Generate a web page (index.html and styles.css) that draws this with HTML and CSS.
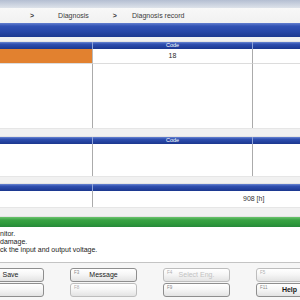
FILE: index.html
```html
<!DOCTYPE html>
<html>
<head>
<meta charset="utf-8">
<link rel="stylesheet" href="styles.css">
</head>
<body>
<div class="app">
  <div class="topband"></div>
  <div class="crumbs">
    <span class="sep sep-a">&gt;</span>
    <span class="crumb crumb-a">Diagnosis</span>
    <span class="sep sep-b">&gt;</span>
    <span class="crumb crumb-b">Diagnosis record</span>
  </div>
  <div class="titlebar"></div>
  <div class="band band-a"></div>

  <section class="grid3">
    <div class="th th-1"></div><div class="th th-2">Code</div><div class="th th-3"></div>
    <div class="td c1 first sel"></div><div class="td c2 first">18</div><div class="td c3 first"></div>
    <div class="td c1 fill-a"></div><div class="td c2 fill-a"></div><div class="td c3 fill-a"></div>
  </section>
  <div class="band band-b"></div>

  <section class="grid3">
    <div class="th th-1"></div><div class="th th-2">Code</div><div class="th th-3"></div>
    <div class="td c1 fill-b"></div><div class="td c2 fill-b"></div><div class="td c3 fill-b"></div>
  </section>
  <div class="band band-c"></div>

  <section class="grid2">
    <div class="th th-1"></div><div class="th th-2w"></div>
    <div class="td c1 row3"></div><div class="td c2w row3"><span class="hours">908 [h]</span></div>
  </section>
  <div class="band band-d"></div>
  <div class="greenbar"></div>

  <div class="message">
    <p class="msg-line">nitor.</p>
    <p class="msg-line">damage.</p>
    <p class="msg-line">ck the input and output voltage.</p>
  </div>

  <div class="footer">
    <div class="keys">
      <div class="key"><span class="fk"></span><span class="kl">Save</span></div>
      <div class="key"><span class="fk">F3</span><span class="kl">Message</span></div>
      <div class="key off"><span class="fk">F4</span><span class="kl">Select Eng.</span></div>
      <div class="key off"><span class="fk">F5</span><span class="kl"></span></div>
      <div class="key"><span class="fk"></span><span class="kl"></span></div>
      <div class="key off"><span class="fk">F8</span><span class="kl"></span></div>
      <div class="key"><span class="fk">F9</span><span class="kl"></span></div>
      <div class="key"><span class="fk">F11</span><span class="kl help">Help</span></div>
    </div>
  </div>
</div>
</body>
</html>
```

FILE: styles.css
```css
html, body {
  margin: 0;
  padding: 0;
  width: 300px;
  height: 300px;
  overflow: hidden;
  background: #f3f3f3;
}

.app {
  width: 300px;
  height: 300px;
  overflow: hidden;
  font-family: "Liberation Sans", Arial, sans-serif;
  color: #2a2a2a;
  display: flex;
  flex-direction: column;
}

.topband {
  height: 8px;
  background: linear-gradient(#b4bed2, #dde2ea);
  flex: none;
}

.crumbs {
  height: 15px;
  flex: none;
  background: linear-gradient(#f8f8f8, #f1f1f1);
  display: flex;
  align-items: center;
  font-size: 7px;
  color: #3a3a3a;
  white-space: nowrap;
}
.sep { font-weight: bold; font-size: 7px; color: #333; }
.sep-a { margin-left: 30px; }
.crumb-a { margin-left: 24px; }
.sep-b { margin-left: 24px; }
.crumb-b { margin-left: 15px; }

.titlebar {
  height: 14px;
  flex: none;
  background: linear-gradient(#6480d0 0, #3152b4 22%, #2747a8 60%, #1d3990 100%);
}

.band {
  flex: none;
  background: #f1f1f1;
  border-bottom: 1px solid #e4e4e4;
  box-sizing: border-box;
}
.band-a { height: 5px; }
.band-b { height: 9px; border-top: 1px solid #e6e6e6; }
.band-c { height: 8px; border-top: 1px solid #e6e6e6; }
.band-d { height: 10px; border-top: 1px solid #e6e6e6; }

.grid3 {
  flex: none;
  display: grid;
  grid-template-columns: 93px 160px 1fr;
  background: #ffffff;
}
.grid2 {
  flex: none;
  display: grid;
  grid-template-columns: 93px 1fr;
  background: #ffffff;
}

.th {
  height: 7px;
  background: linear-gradient(#6a86d2 0, #3050b0 30%, #23419e 70%, #1c378e 100%);
  color: #ffffff;
  font-size: 5.5px;
  line-height: 7px;
  text-align: center;
}
.th-1, .th-2 { border-right: 1px solid #8ea2d8; }

.td { box-sizing: border-box; background: #ffffff; }
.c1, .c2 { border-right: 1px solid #ababab; }
.first {
  height: 15px;
  border-bottom: 1px solid #dcdcdc;
  font-size: 7px;
  line-height: 14px;
  text-align: center;
}
.c1.sel { background: #e2812f; border-right-color: #b9b9b9; }
.fill-a { height: 64px; }
.fill-b { height: 32px; }
.row3 { height: 16px; }
.c2w { font-size: 7px; line-height: 16px; padding-left: 150px; }
.hours { color: #333; }

.greenbar {
  height: 10px;
  flex: none;
  background: linear-gradient(#6cc46e 0, #3aa245 30%, #2f9a3c 65%, #27893a 100%);
}

.message {
  height: 36px;
  flex: none;
  box-sizing: border-box;
  background: #ffffff;
  padding-top: 3px;
  border-bottom: 1px solid #c4c4c4;
}
.msg-line {
  margin: 0;
  font-size: 7px;
  line-height: 8px;
  color: #222;
  white-space: nowrap;
}

.footer {
  flex: 1;
  background: #f6f6f6;
  padding-top: 5px;
}
.keys {
  margin-left: -23px;
  display: grid;
  grid-template-columns: repeat(4, 67px);
  column-gap: 26px;
  row-gap: 1px;
}
.key {
  height: 14px;
  box-sizing: border-box;
  border: 1px solid #8e8e8e;
  border-radius: 3px;
  background: linear-gradient(#ffffff 0, #f6f6f6 45%, #e3e3e3 100%);
  display: grid;
}
.fk, .kl { grid-area: 1 / 1; }
.fk {
  font-size: 4.5px;
  line-height: 5px;
  color: #8a8a8a;
  padding: 1px 0 0 3px;
  align-self: start;
}
.kl {
  font-size: 7px;
  line-height: 12px;
  text-align: center;
  color: #222;
}
.help { font-weight: bold; color: #1a1a1a; }
.key.off { border-color: #bdbdbd; }
.key.off .kl { color: #c2c2c2; }
.key.off .fk { color: #b0b0b0; }
```
